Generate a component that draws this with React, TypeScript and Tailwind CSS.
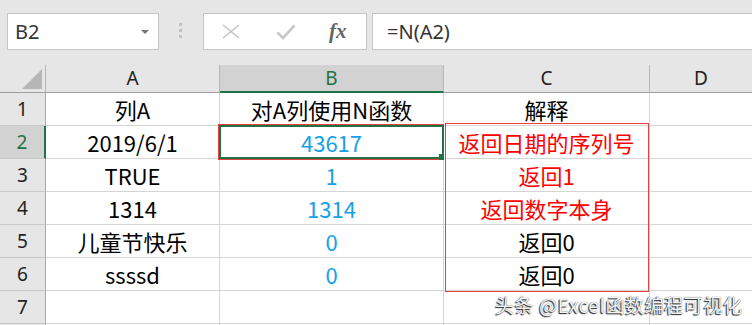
import React from 'react';

const cellFont = { fontFamily: '"Microsoft YaHei", "Noto Sans CJK SC", sans-serif' };

interface Row {
  a: string;
  b: string;
  c: string;
  cRed: boolean;
}

const rows: Row[] = [
  { a: '2019/6/1', b: '43617', c: '返回日期的序列号', cRed: true },
  { a: 'TRUE', b: '1', c: '返回1', cRed: true },
  { a: '1314', b: '1314', c: '返回数字本身', cRed: true },
  { a: '儿童节快乐', b: '0', c: '返回0', cRed: false },
  { a: 'ssssd', b: '0', c: '返回0', cRed: false },
];

function Toolbar() {
  return (
    <div className="flex h-[65px] items-start bg-[#e6e6e6] pt-[13px]">
      {/* Name box */}
      <div className="ml-[7px] flex h-[37px] w-[152px] items-center justify-between border border-[#c6c6c6] bg-white pl-[7px] pr-[9px]">
        <span className="text-[20px] text-[#333]" style={{ fontFamily: '"Noto Sans", sans-serif' }}>B2</span>
        <span className="h-0 w-0 border-x-[4px] border-t-[4px] border-x-transparent border-t-[#777]" />
      </div>
      {/* grip dots */}
      <div className="ml-[20px] mt-[10px] flex flex-col gap-[3px]">
        <span className="h-[3px] w-[3px] bg-[#c2c2c2]" />
        <span className="h-[3px] w-[3px] bg-[#c2c2c2]" />
        <span className="h-[3px] w-[3px] bg-[#c2c2c2]" />
      </div>
      {/* cancel / enter / fx */}
      <div className="ml-[21px] flex h-[37px] w-[164px] items-center border border-[#c6c6c6] bg-white">
        <svg width="18" height="15" viewBox="0 0 18 15" className="ml-[18px]">
          <path d="M1 1L17 14M17 1L1 14" stroke="#c4c4c4" strokeWidth="1.6" fill="none" />
        </svg>
        <svg width="20" height="16" viewBox="0 0 20 16" className="ml-[36px]">
          <path d="M1.5 8.5L7 14L18.5 1.5" stroke="#c8c8c8" strokeWidth="2.6" fill="none" />
        </svg>
        <span
          className="ml-[33px] text-[21px] font-bold italic leading-none text-[#666]"
          style={{ fontFamily: '"Liberation Serif", serif' }}
        >
          fx
        </span>
      </div>
      {/* formula input */}
      <div className="ml-[5px] flex h-[37px] flex-1 items-center border border-r-0 border-[#c6c6c6] bg-white pl-[14px]">
        <span className="text-[20px] text-[#333]" style={{ fontFamily: '"Noto Sans", sans-serif' }}>=N(A2)</span>
      </div>
    </div>
  );
}

export default function App() {
  const uiFont = { fontFamily: '"Noto Sans", sans-serif' };
  return (
    <div className="h-[325px] w-[752px] overflow-hidden bg-white">
      <Toolbar />

      <div className="relative">
        <div className="grid grid-cols-[46px_174px_224px_206px_102px] grid-rows-[28px_repeat(8,33px)]">
          {/* Column header row */}
          <div className="relative border-r border-b border-r-[#b7b7b7] border-b-[#9e9e9e] bg-[#e6e6e6]">
            <svg width="20" height="20" className="absolute bottom-[3px] right-[3px]">
              <polygon points="20,0 20,20 0,20" fill="#b6b6b6" />
            </svg>
          </div>
          <div style={uiFont} className="flex items-center justify-center border-r border-b border-r-[#b7b7b7] border-b-[#9e9e9e] bg-[#e6e6e6] text-[19px] text-[#222]">A</div>
          <div style={uiFont} className="flex items-center justify-center border-r border-b-2 border-r-[#b7b7b7] border-b-[#217346] bg-[#d2d2d2] text-[19px] text-[#217346]">B</div>
          <div style={uiFont} className="flex items-center justify-center border-r border-b border-r-[#b7b7b7] border-b-[#9e9e9e] bg-[#e6e6e6] text-[19px] text-[#222]">C</div>
          <div style={uiFont} className="flex items-center justify-center border-b border-b-[#9e9e9e] bg-[#e6e6e6] text-[19px] text-[#222]">D</div>

          {/* Row 1 */}
          <div style={uiFont} className="flex items-center justify-center border-r border-b border-r-[#ababab] border-b-[#c8c8c8] bg-[#e6e6e6] text-[19px] text-[#222]">1</div>
          <div style={cellFont} className="flex items-center justify-center border-r border-b border-[#d4d4d4] text-[22px] text-black">列A</div>
          <div style={cellFont} className="flex items-center justify-center border-r border-b border-[#d4d4d4] text-[22px] text-black">对A列使用N函数</div>
          <div style={cellFont} className="flex items-center justify-center border-r border-b border-[#d4d4d4] text-[22px] text-black">解释</div>
          <div className="border-b border-[#d4d4d4]" />

          {rows.map((r, i) => {
            const active = i === 0;
            return (
              <React.Fragment key={i}>
                <div
                  style={uiFont}
                  className={
                    active
                      ? 'flex items-center justify-center border-r-2 border-b border-r-[#217346] border-b-[#c8c8c8] bg-[#d2d2d2] text-[19px] text-[#217346]'
                      : 'flex items-center justify-center border-r border-b border-r-[#ababab] border-b-[#c8c8c8] bg-[#e6e6e6] text-[19px] text-[#222]'
                  }
                >
                  {i + 2}
                </div>
                <div style={cellFont} className="flex items-center justify-center border-r border-b border-[#d4d4d4] text-[22px] text-black">{r.a}</div>
                <div style={cellFont} className="flex items-center justify-center border-r border-b border-[#d4d4d4] text-[22px] text-[#18a0e6]">{r.b}</div>
                <div
                  style={cellFont}
                  className={`flex items-center justify-center border-r border-b border-[#d4d4d4] text-[22px] ${r.cRed ? 'text-[#ff0000]' : 'text-black'}`}
                >
                  {r.c}
                </div>
                <div className="border-b border-[#d4d4d4]" />
              </React.Fragment>
            );
          })}

          {/* Row 7 */}
          <div style={uiFont} className="flex items-center justify-center border-r border-b border-r-[#ababab] border-b-[#c8c8c8] bg-[#e6e6e6] text-[19px] text-[#222]">7</div>
          <div className="border-r border-b border-[#d4d4d4]" />
          <div className="border-r border-b border-[#d4d4d4]" />
          <div className="border-r border-b border-[#d4d4d4]" />
          <div className="border-b border-[#d4d4d4]" />

          {/* Row 8, only its top edge shows */}
          <div className="border-r border-r-[#ababab] bg-[#e6e6e6]" />
          <div className="border-r border-[#d4d4d4]" />
          <div className="border-r border-[#d4d4d4]" />
          <div className="border-r border-[#d4d4d4]" />
          <div />
        </div>

        {/* Active cell B2: red outline around green selection */}
        <div className="pointer-events-none absolute left-[218px] top-[59px] h-[36px] w-[226px] border border-[#e8403f]" />
        <div className="pointer-events-none absolute left-[219px] top-[60px] h-[34px] w-[225px] border-2 border-[#217346]" />
        <div className="pointer-events-none absolute left-[439px] top-[89px] h-[6px] w-[5px] bg-[#217346]" />

        {/* Red box around C2:C6 */}
        <div className="pointer-events-none absolute left-[445px] top-[58px] h-[169px] w-[204px] border border-[#e8403f]" />

        {/* watermark */}
        <div
          className="pointer-events-none absolute left-[495px] top-[230px] text-[19px] leading-none tracking-[0.6px] text-[#f4f4f4] [text-shadow:-1px_1px_1px_#222,0_0_1px_#444]"
          style={{ fontFamily: '"Noto Sans CJK SC", sans-serif' }}
        >
          头条 @Excel函数编程可视化
        </div>
      </div>
    </div>
  );
}
